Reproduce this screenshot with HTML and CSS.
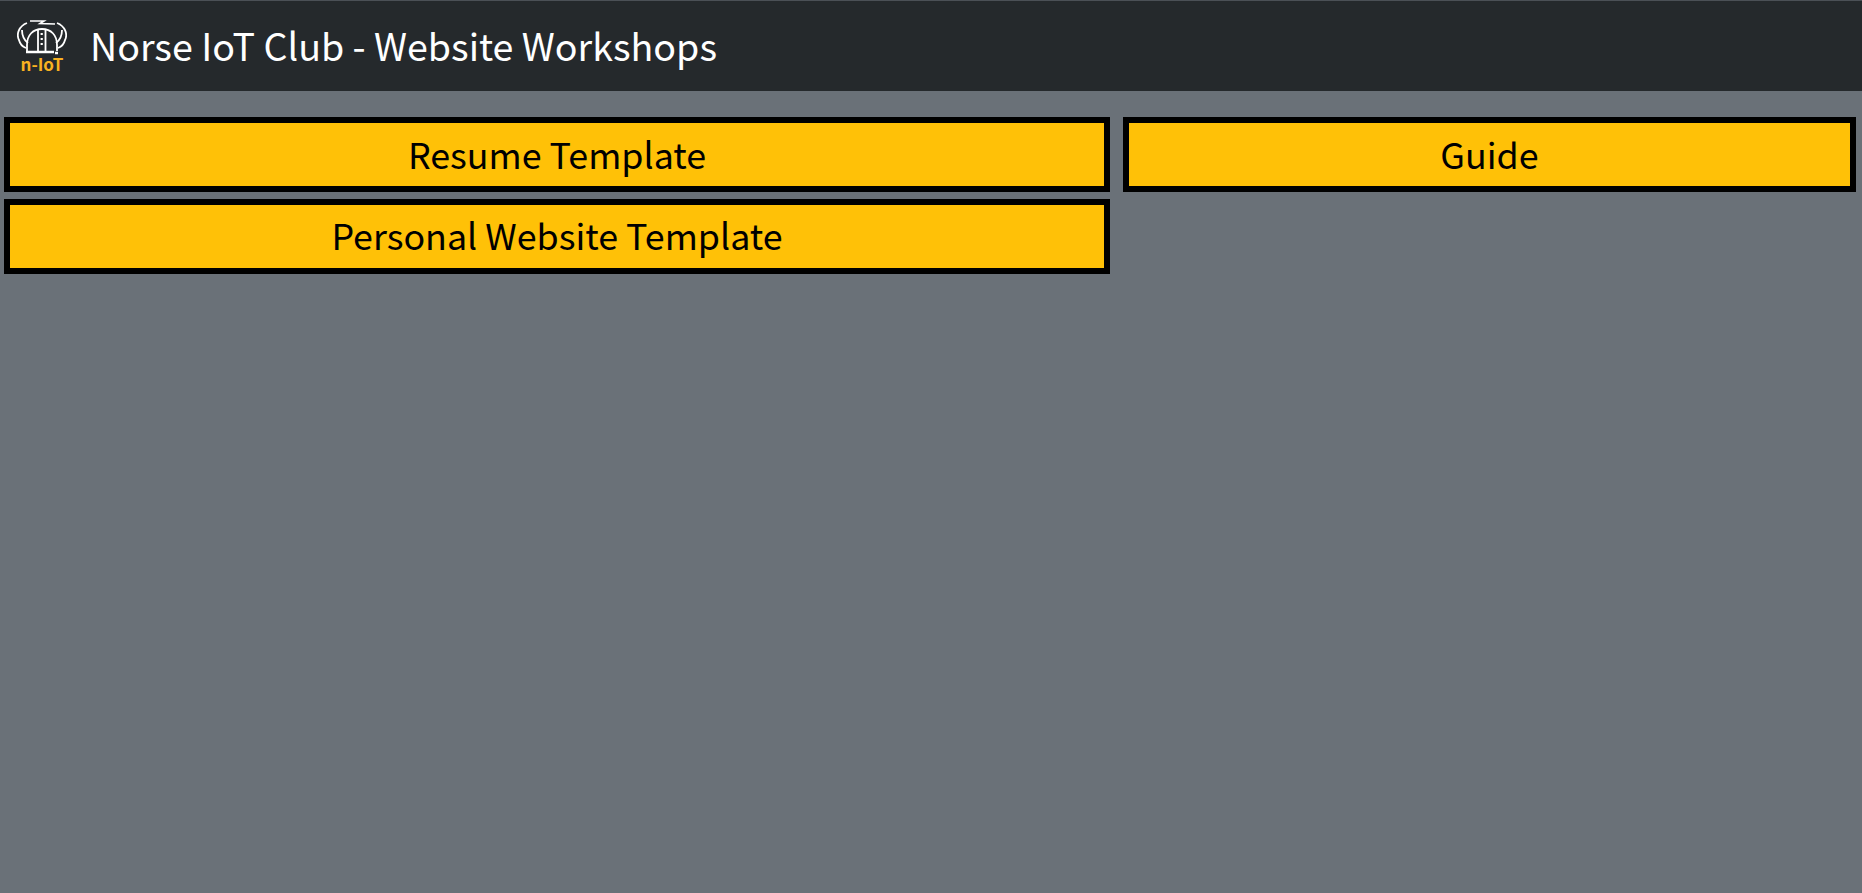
FILE: index.html
```html
<!DOCTYPE html>
<html lang="en">
<head>
    <meta charset="UTF-8">
    <meta name="viewport" content="width=device-width, initial-scale=1.0">
    <title>Norse IoT Club - Website Workshops</title>
    <link rel="stylesheet" href="styles.css">
</head>
<body>
    <header class="navbar">
        <div class="brand-logo">
            <svg class="helmet" viewBox="0 0 50 36" width="50" height="36" fill="none" stroke="#fff" stroke-width="1.8">
                <!-- horns -->
                <path d="M10 4 C2 7 -1 15 2 21 C3 25 6 28 9 29"/>
                <path d="M40 4 C48 7 51 15 48 21 C47 25 44 28 41 29"/>
                <path d="M5 11 C5 17 7 21 11 24"/>
                <path d="M45 11 C45 17 43 21 39 24"/>
                <!-- dome -->
                <path d="M10 32 V26 C10 16 16 10 25 10 C34 10 40 16 40 26 V32"/>
                <path d="M9 33 H37 M41 34 H38" stroke-width="2.4"/>
                <path d="M21 10 V32 M28.500 10 V32"/>
                <path d="M24.700 14 V16 M24.700 19 V21 M24.700 24 V26" stroke-width="2.2"/>
                <!-- bolt -->
                <path d="M13 2 H27 L23 4.500 L38 5" stroke-width="1.6"/>
            </svg>
            <span class="brand-tag">n-IoT</span>
        </div>
        <span class="brand-title">Norse IoT Club - Website Workshops</span>
    </header>

    <main class="workshops">
        <a class="workshop-btn" href="#">Resume Template</a>
        <a class="workshop-btn" href="#">Guide</a>
        <a class="workshop-btn workshop-btn-low" href="#">Personal Website Template</a>
    </main>
</body>
</html>
```

FILE: styles.css
```css
body {
    margin: 0;
    min-height: 100vh;
    background-color: #6a7178;
    font-family: "Noto Sans CJK SC", "Noto Sans", sans-serif;
}
.navbar {
    display: flex;
    align-items: center;
    gap: 23px;
    height: 90px;
    padding-left: 17px;
    background-color: #25292c;
    border-top: 1px solid #4b5056;
}
.brand-logo {
    display: flex;
    flex-direction: column;
    align-items: center;
    width: 50px;
}
.helmet {
    display: block;
}
.brand-tag {
    color: #f9b121;
    font-size: 17px;
    font-weight: 700;
    line-height: 18px;
}
.brand-title {
    color: #fff;
    font-size: 37.6px;
    line-height: 46px;
    padding-bottom: 2px;
}
.workshops {
    display: grid;
    grid-template-columns: 1106fr 733fr;
    column-gap: 13px;
    row-gap: 7px;
    padding: 26px 6px 0 4px;
}
.workshop-btn {
    height: 63px;
    border: 6px solid #000;
    background-color: #ffc107;
    color: #000;
    font-size: 35.800px;
    line-height: 60px;
    text-align: center;
    text-decoration: none;
}
.workshop-btn-low {
    line-height: 58px;
}
```
